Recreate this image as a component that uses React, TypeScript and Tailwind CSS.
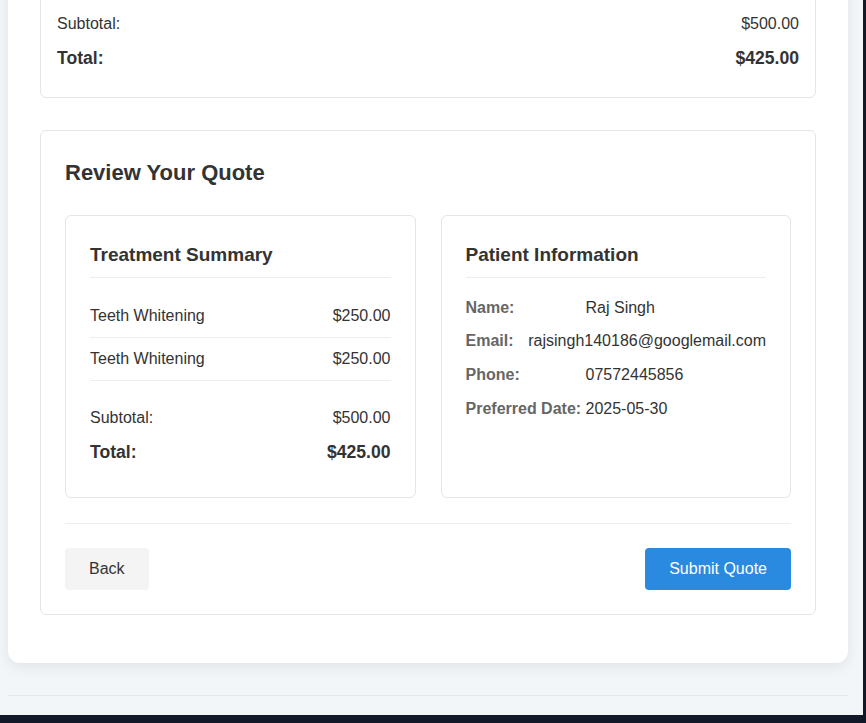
import React from "react";

const font = { fontFamily: '"Liberation Sans", Arial, Helvetica, sans-serif' };

function TotalsRows({ subPy = "py-[7.5px]" }: { subPy?: string }) {
  return (
    <>
      <div className={`flex justify-between ${subPy} text-[16px] leading-[18.4px] text-[#333]`}>
        <span>Subtotal:</span>
        <span>$500.00</span>
      </div>
      <div className="flex justify-between py-[7px] text-[17.6px] leading-[20.2px] font-bold text-[#333]">
        <span>Total:</span>
        <span>$425.00</span>
      </div>
    </>
  );
}

function InfoRow({ label, value }: { label: string; value: string }) {
  return (
    <div className="flex text-[16px] leading-[18.4px]">
      <span className="w-[120px] font-bold text-[#666]">{label}</span>
      <span className="text-[#333]">{value}</span>
    </div>
  );
}

export default function App() {
  return (
    <div className="h-[723px] w-full overflow-hidden bg-[#111827]" style={font}>
      <div className="h-[715px] w-[863px] overflow-hidden bg-[#f3f6f9]">
        <div className="ml-[8px] w-[840px] rounded-b-xl bg-white px-[32px] pb-[48px] shadow-[0_4px_14px_rgba(0,0,0,0.08)]">
          {/* Top card (partially visible) */}
          <div className="-mt-[18px] rounded-md border border-[#e5e5e5] bg-white px-[16px] pt-[24px] pb-[21px]">
            <TotalsRows subPy="py-[8px]" />
          </div>

          {/* Review card */}
          <div className="mt-[32px] rounded-md border border-[#e5e5e5] bg-white p-[24px]">
            <h2 className="mb-[25px] text-[22px] leading-[35px] font-bold text-[#333]">
              Review Your Quote
            </h2>

            <div className="grid grid-cols-2 gap-[25px]">
              {/* Treatment summary */}
              <div className="rounded-md border border-[#e5e5e5] p-[24px]">
                <h3 className="mb-[17px] border-b border-[#eeeeee] pb-[7px] text-[19px] leading-[30px] font-bold text-[#333]">
                  Treatment Summary
                </h3>
                <div className="flex justify-between border-b border-[#eeeeee] py-[12px] text-[16px] leading-[18.4px] text-[#333]">
                  <span>Teeth Whitening</span>
                  <span>$250.00</span>
                </div>
                <div className="flex justify-between border-b border-[#eeeeee] py-[12px] text-[16px] leading-[18.4px] text-[#333]">
                  <span>Teeth Whitening</span>
                  <span>$250.00</span>
                </div>
                <div className="pt-[20px] pb-[4px]">
                  <TotalsRows />
                </div>
              </div>

              {/* Patient information */}
              <div className="rounded-md border border-[#e5e5e5] p-[24px]">
                <h3 className="mb-[17px] border-b border-[#eeeeee] pb-[7px] text-[19px] leading-[30px] font-bold text-[#333]">
                  Patient Information
                </h3>
                <div className="flex flex-col gap-[15.3px] pt-[4px]">
                  <InfoRow label="Name:" value="Raj Singh" />
                  <InfoRow label="Email:" value="rajsingh140186@googlemail.com" />
                  <InfoRow label="Phone:" value="07572445856" />
                  <InfoRow label="Preferred Date:" value="2025-05-30" />
                </div>
              </div>
            </div>

            <div className="mt-[25px] flex items-center justify-between border-t border-[#eeeeee] pt-[24px]">
              <button className="h-[42px] rounded-[4px] bg-[#f4f4f4] px-[24px] text-[16px] text-[#333]">
                Back
              </button>
              <button className="h-[42px] rounded-[4px] bg-[#2a8ae0] px-[24px] text-[16px] text-white">
                Submit Quote
              </button>
            </div>
          </div>
        </div>

        <div className="ml-[8px] mt-[32px] h-px w-[840px] bg-[#e5e7eb]" />
      </div>
    </div>
  );
}
